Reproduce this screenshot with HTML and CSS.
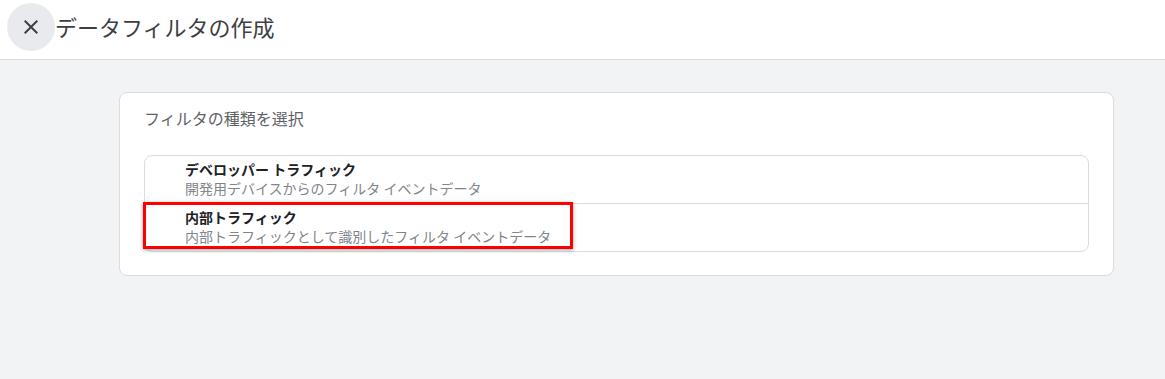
FILE: index.html
```html
<!DOCTYPE html>
<html lang="ja">
<head>
    <meta charset="UTF-8">
    <meta name="viewport" content="width=device-width, initial-scale=1.0">
    <title>データフィルタの作成</title>
    <link rel="stylesheet" href="styles.css">
</head>
<body>
    <div class="header">
        <div class="close-btn">
            <svg width="24" height="24" viewBox="0 0 24 24"><path d="M19 6.41L17.59 5 12 10.59 6.41 5 5 6.41 10.59 12 5 17.59 6.41 19 12 13.41 17.59 19 19 17.59 13.41 12z" fill="#3c4043"/></svg>
        </div>
        <h1 class="header-title">データフィルタの作成</h1>
    </div>

    <div class="content">
        <div class="card">
            <div class="card-title">フィルタの種類を選択</div>
            <div class="option-list">
                <div class="option">
                    <div class="option-name">デベロッパー トラフィック</div>
                    <div class="option-desc">開発用デバイスからのフィルタ イベントデータ</div>
                </div>
                <div class="option">
                    <div class="option-name">内部トラフィック</div>
                    <div class="option-desc">内部トラフィックとして識別したフィルタ イベントデータ</div>
                    <div class="highlight"></div>
                </div>
            </div>
        </div>
    </div>
</body>
</html>
```

FILE: styles.css
```css
body {
    margin: 0;
    height: 100vh;
    background-color: #f1f3f4;
    font-family: "Noto Sans CJK JP", "Noto Sans", sans-serif;
    color: #202124;
}

.header {
    display: flex;
    align-items: center;
    height: 60px;
    background-color: #fff;
    border-bottom: 1px solid #dadce0;
    padding-left: 7px;
    box-sizing: border-box;
}

.close-btn {
    width: 48px;
    height: 48px;
    border-radius: 50%;
    background-color: #e8eaed;
    display: flex;
    justify-content: center;
    align-items: center;
    margin-top: -6px;
}

.header-title {
    margin: -8px 0 0 0;
    font-size: 22px;
    font-weight: 400;
    color: #3c4043;
}

.content {
    padding: 32px 51px 0 119px;
}

.card {
    background-color: #fff;
    border: 1px solid #dadce0;
    border-radius: 8px;
    padding: 12px 24px 23px 24px;
}

.card-title {
    font-size: 16px;
    color: #5f6368;
    line-height: 26px;
    margin-bottom: 24px;
}

.option-list {
    border: 1px solid #dadce0;
    border-radius: 8px;
}

.option {
    position: relative;
    padding: 4px 0 5px 40px;
    height: 38px;
}

.option + .option {
    border-top: 1px solid #dadce0;
}

.option-name {
    font-size: 14px;
    font-weight: 700;
    color: #202124;
    line-height: 19px;
}

.option-desc {
    font-size: 14px;
    color: #80868b;
    line-height: 19px;
}

.highlight {
    position: absolute;
    left: -2px;
    top: -2px;
    width: 430px;
    height: 47px;
    box-sizing: border-box;
    border: 3px solid #f00;
    box-shadow: 0 1px 4px rgba(0, 0, 0, 0.35);
}
```
